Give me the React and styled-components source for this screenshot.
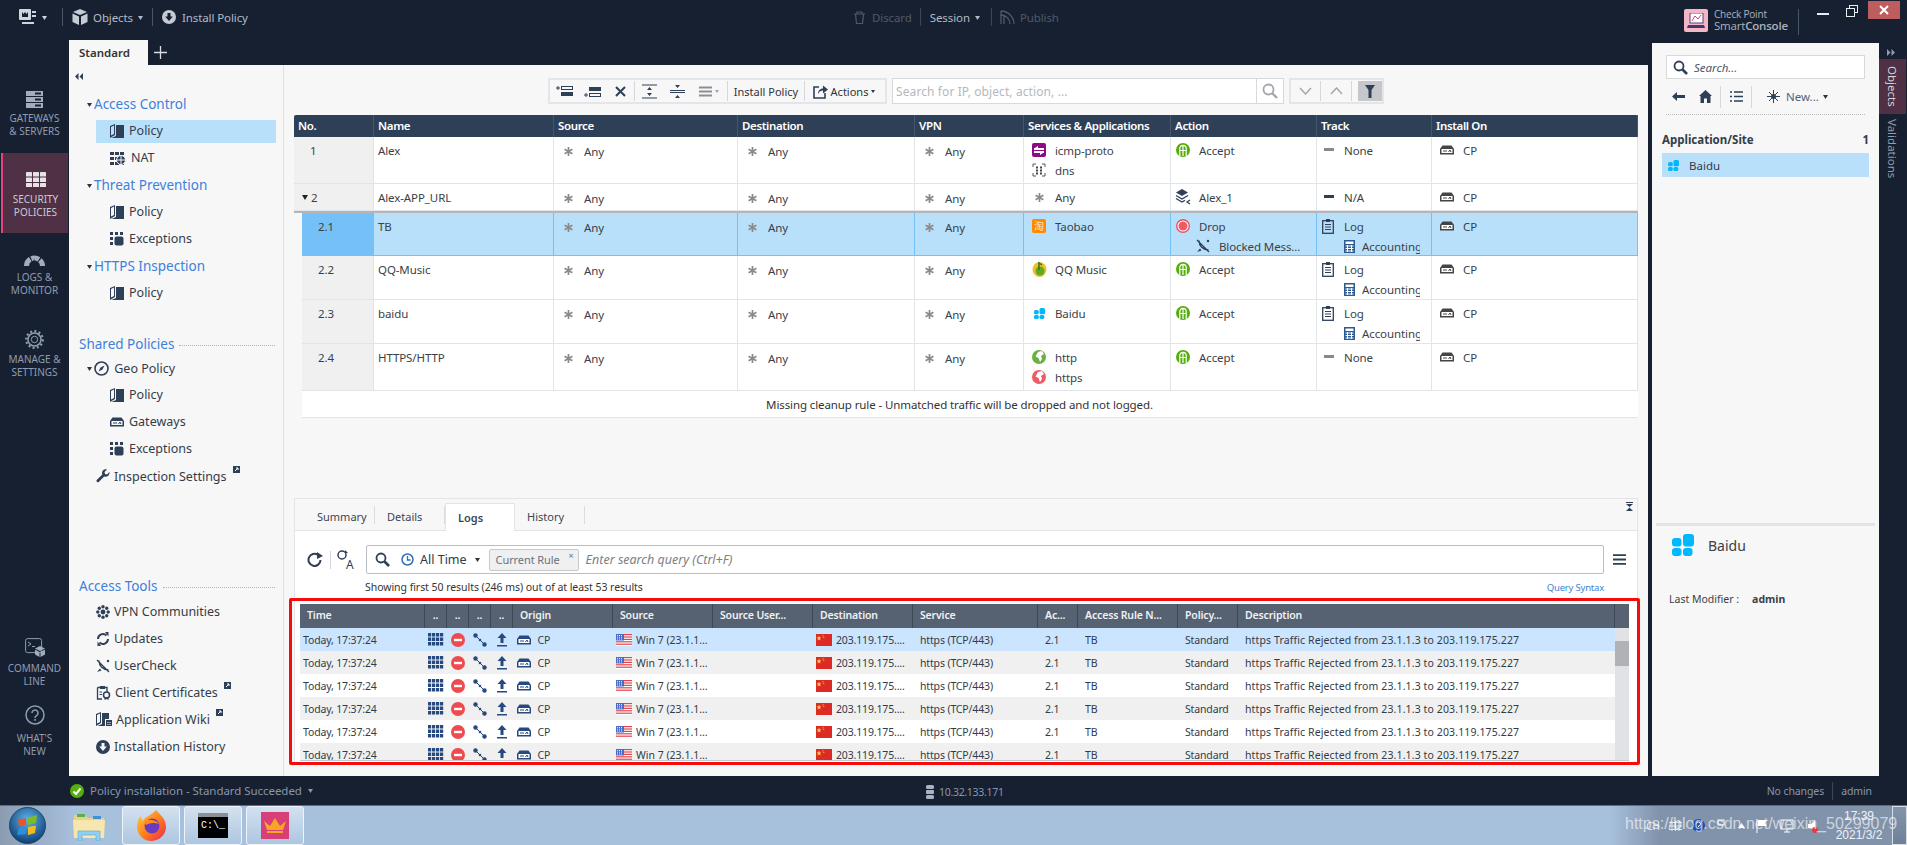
import styled, { createGlobalStyle } from 'styled-components';

const GlobalStyle = createGlobalStyle`
    html, body { margin: 0; padding: 0; background: #172030; }
    * { box-sizing: border-box; }
    body { font-family: "Noto Sans", "Open Sans", sans-serif; font-size: 12px; color: #3a3f48; }
`;

const DARK = '#2e3f58';

/* ---------- icons ---------- */
const Svg = ({ s = 14, w, h, children, ...rest }) => (
    <svg width={w || s} height={h || s} viewBox={`0 0 ${w || s} ${h || s}`} style={{ flex: 'none', display: 'block' }} {...rest}>{children}</svg>
);
const Caret = ({ c = '#333', s = 5 }) => <Svg w={s} h={s}><path d={`M0 1H${s}L${s / 2} ${s}Z`} fill={c} /></Svg>;
const BookIcon = ({ c = DARK }) => (
    <Svg><path d="M0 2 5 0V11L0 14Z M1 3V11.5L4 10V1.5Z" fill={c} fillRule="evenodd" /><path d="M6 1H14V14H1.5L6 12Z" fill={c} /></Svg>
);
const NatIcon = () => (
    <Svg w={16} h={14}>
        {[0, 5, 10].map(x => [1, 6, 11].map(y => <rect key={x + '' + y} x={x} y={y} width="4" height="3" fill={DARK} />))}
        <circle cx="11" cy="9" r="4.5" fill={DARK} stroke="#f7f7f7" />
        <path d="M11 5V13M7 9H15" stroke="#f7f7f7" />
    </Svg>
);
const ExceptionsIcon = () => (
    <Svg>
        <rect x="0" y="0" width="3" height="3" fill={DARK} /><rect x="5" y="0" width="3" height="3" fill={DARK} /><rect x="10" y="0" width="3" height="3" fill={DARK} />
        <rect x="0" y="5" width="3" height="3" fill={DARK} /><rect x="0" y="10" width="3" height="3" fill={DARK} />
        <rect x="4.5" y="4.5" width="9" height="9" rx="2" fill={DARK} />
    </Svg>
);
const DeviceIcon = ({ c = DARK, bg = '#fff' }) => (
    <Svg h={12}><path d="M2.5 1.5H11.5L14 5V10.5H0V5Z" fill={c} /><rect x="1.5" y="5" width="11" height="4" fill={bg} /><path d="M3 7H7M8.5 8 10 6 11 8" stroke={c} fill="none" /></Svg>
);
const CompassIcon = () => (
    <Svg s={15}><circle cx="7.5" cy="7.5" r="6.5" fill="none" stroke={DARK} strokeWidth="1.6" /><path d="M10.5 4.5 8.5 8.5 4.5 10.5 6.5 6.5Z" fill={DARK} /></Svg>
);
const WrenchIcon = () => (
    <Svg><path d="M13.5 3 11 5.5 9 5 8.5 3 11 .6C8.5-.3 6 1.5 6 4c0 .6.1 1 .3 1.5L.7 11c-.9 1 .9 3 2 2l5.5-5.5c2.8 1 5.8-1.5 5.3-4.5Z" fill={DARK} /></Svg>
);
const SnowIcon = () => (
    <Svg>
        <circle cx="7" cy="7" r="2.4" fill={DARK} />
        {[[7, 1.8], [7, 12.2], [1.8, 7], [12.2, 7], [3.3, 3.3], [10.7, 3.3], [3.3, 10.7], [10.7, 10.7]].map(([x, y]) => <circle key={x + '-' + y} cx={x} cy={y} r="1.7" fill={DARK} />)}
    </Svg>
);
const SyncIcon = () => (
    <Svg><path d="M2 7a5 5 0 0 1 8.5-3.5M12 7a5 5 0 0 1-8.5 3.5" fill="none" stroke={DARK} strokeWidth="2" /><path d="M9 0h3.5v4.5Z M5 14H1.5V9.5Z" fill={DARK} /></Svg>
);
const SatelliteIcon = () => (
    <Svg>
        <path d="M1 1 13 13M3 1.5C3 7 7 11 12.5 11" fill="none" stroke={DARK} strokeWidth="1.3" />
        <circle cx="12" cy="2" r="1.2" fill={DARK} /><path d="M1 13 4 9.5 5.5 11.5Z" fill={DARK} />
    </Svg>
);
const CertIcon = () => (
    <Svg w={15} h={15}>
        <path d="M1.5 2.5H11V7M6 14H1.5V2.5" fill="none" stroke={DARK} strokeWidth="1.3" /><rect x="4" y="1" width="5" height="3" fill={DARK} />
        <path d="M3.5 7H6M3.5 9.5H6" stroke={DARK} /><circle cx="10.5" cy="10" r="3" fill="none" stroke={DARK} strokeWidth="1.5" /><path d="M8.5 12.5V15L10.5 14 12.5 15V12.5" fill={DARK} />
    </Svg>
);
const WikiIcon = () => (
    <Svg w={16} h={15}><path d="M0 2 5 0V11L0 14Z M1 3V11.5L4 10V1.5Z" fill={DARK} fillRule="evenodd" /><path d="M6 1H13V7H9V14H1.5L6 12Z" fill={DARK} /><rect x="10" y="8" width="6" height="6" fill={DARK} /><path d="M11.5 10.5h1M13.5 10.5h1M11.5 12.5h1M13.5 12.5h1" stroke="#fff" /></Svg>
);
const InstallIcon = ({ c = DARK, bg = '#f7f7f7' }) => (
    <Svg><circle cx="7" cy="7" r="7" fill={c} /><path d="M5.5 3H8.5V6.5H10.8L7 11 3.2 6.5H5.5Z" fill={bg} /></Svg>
);
const ExternalBadge = () => (
    <ExternalMark><Svg s={7}><rect width="7" height="7" fill={DARK} /><path d="M2 5 5 2M3 2H5V4" stroke="#fff" fill="none" /></Svg></ExternalMark>
);
const AnyIcon = () => (
    <Svg s={9}><path d="M4.5 0V9M.6 2.2 8.4 6.8M8.4 2.2 .6 6.8" stroke="#8a8a8a" strokeWidth="1.7" /></Svg>
);
const AcceptIcon = () => (
    <Svg><circle cx="7" cy="7" r="7" fill="#55ae0c" /><path d="M3.8 13V5.5a3.2 3.2 0 0 1 6.4 0V13M3.800 7.500H10.200M7 2.500V13" fill="none" stroke="#fff" strokeWidth="1.2" /></Svg>
);
const DropIcon = () => (
    <Svg><circle cx="7" cy="7" r="6.3" fill="#fff" stroke="#ea5060" strokeWidth="1.4" /><circle cx="7" cy="7" r="4.5" fill="#ef5a64" /></Svg>
);
const LogIcon = () => (
    <Svg w={12} h={15}><rect x=".7" y="1.7" width="10.6" height="12.6" fill="none" stroke={DARK} strokeWidth="1.3" /><rect x="4" y="0" width="4" height="3" fill={DARK} /><path d="M3 5.5H9M3 8H9M3 10.5H9" stroke={DARK} /></Svg>
);
const CalcIcon = () => (
    <Svg w={11} h={13}><rect width="11" height="13" fill="#2c5b93" /><rect x="1.5" y="1.5" width="8" height="2.5" fill="#fff" /><path d="M1.5 6H9.5M1.5 8.5H9.5M1.5 11H9.5M3.5 5V12M7.5 5V12" stroke="#fff" /></Svg>
);
const DashIcon = ({ c = '#888' }) => <Svg w={10} h={4}><rect width="10" height="3" fill={c} /></Svg>;
const LayersIcon = () => (
    <Svg w={16} h={16}><path d="M7 0 13 3.5 7 7 1 3.5Z" fill={DARK} /><path d="M1 6.5 7 10 13 6.5M1 9.5 7 13 10 11.2" fill="none" stroke={DARK} strokeWidth="1.3" /><path d="M15 11 12 13 15 15" fill="none" stroke={DARK} strokeWidth="1.3" /></Svg>
);
const IcmpIcon = () => (
    <Svg><rect width="14" height="14" rx="2" fill="#8b0d86" /><path d="M2 5H12V7H2ZM2 8H12V10H2Z" fill="#fff" /><path d="M6 3 3 5H6ZM8 12 11 10H8Z" fill="#fff" /></Svg>
);
const DnsIcon = () => (
    <Svg>
        <path d="M4 1H1V4M10 1H13V4M4 13H1V10M10 13H13V10" fill="none" stroke="#555" />
        {[4, 8].map(x => [3.5, 6.5, 9.5].map(y => <rect key={x + '-' + y} x={x} y={y} width="2" height="2" fill="#444" />))}
    </Svg>
);
const TaobaoIcon = () => <TaobaoMark>淘</TaobaoMark>;
const QqIcon = () => (
    <Svg w={15} h={16}><ellipse cx="7.5" cy="8.5" rx="7" ry="7.5" fill="#f3c024" /><circle cx="8" cy="10" r="4.5" fill="#5fa82a" /><path d="M7 9V2L10 4" fill="none" stroke="#2e7a17" strokeWidth="1.5" /></Svg>
);
const BaiduIcon = ({ s = 11 }) => (
    <svg width={s} height={s} viewBox="0 0 22 22" style={{ flex: 'none', display: 'block' }}>
        <rect x="0" y="4" width="9.5" height="8.5" rx="3" fill="#00b8ff" /><rect x="11" y="0" width="11" height="12.5" rx="3" fill="#00b8ff" />
        <rect x="0" y="14" width="9.5" height="8" rx="3" fill="#00b8ff" /><rect x="11" y="14" width="9.5" height="8" rx="3" fill="#00b8ff" />
    </svg>
);
const GlobeIcon = ({ c }) => (
    <Svg><circle cx="7" cy="7" r="7" fill={c} /><path d="M6 2 10 1 12 4 9 6 10 9 8 12 6.5 8 3.5 6.5Z" fill="#fff" /></Svg>
);
const ServiceIcons = { icmp: IcmpIcon, dns: DnsIcon, taobao: TaobaoIcon, qq: QqIcon, baidu: BaiduIcon };

/* log row icons */
const LOGBLUE = '#26497f';
const BladeIcon = () => (
    <Svg w={16} h={13}>{[0, 4.5, 9].map(y => [0, 4, 8, 12].map(x => <rect key={x + '-' + y} x={x} y={y} width="3.2" height="3.5" fill={LOGBLUE} />))}</Svg>
);
const BlockIcon = () => <Svg><circle cx="7" cy="7" r="7" fill="#ee4b4f" /><rect x="3" y="5.8" width="8" height="2.4" fill="#fff" /></Svg>;
const NodesIcon = () => (
    <Svg><path d="M2 2 7 7 12 12" stroke={LOGBLUE} strokeWidth="1" /><circle cx="2.5" cy="2.5" r="2.2" fill={LOGBLUE} /><circle cx="7" cy="7" r="1.3" fill={LOGBLUE} /><circle cx="11.5" cy="11.5" r="2.2" fill={LOGBLUE} /></Svg>
);
const UploadIcon = () => <Svg w={10} h={14}><path d="M5 0 9.5 5H6.500V10H3.500V5H.5Z" fill={LOGBLUE} /><rect y="12" width="10" height="1.5" fill={LOGBLUE} /></Svg>;
const UsFlag = () => (
    <Svg w={16} h={12}>
        <rect width="16" height="12" fill="#fff" />
        {[0, 2.4, 4.8, 7.2, 9.6].map(y => <rect key={y} y={y} width="16" height="1.2" fill="#e0444c" />)}
        <rect width="8" height="6.5" fill="#4b6bc8" /><path d="M1 1.5h6M1 3.2h6M1 5h6" stroke="#dfe6ff" strokeDasharray="1 1" />
    </Svg>
);
const CnFlag = () => (
    <Svg w={16} h={12}><rect width="16" height="12" fill="#de2a24" /><path d="M3 1.5 3.7 3.5 5.5 3.5 4 4.7 4.6 6.5 3 5.4 1.4 6.5 2 4.7 .5 3.5 2.3 3.5Z" fill="#ffd84a" /><circle cx="7" cy="1.8" r=".6" fill="#ffd84a" /><circle cx="7.8" cy="3.5" r=".6" fill="#ffd84a" /></Svg>
);

/* ---------- top bar ---------- */
const Workspace = styled.div`
    display: flex;
    height: 776px;
`;
const LeftCol = styled.div`
    width: 1652px;
    display: flex;
    flex-direction: column;
`;
const TopBar = styled.div`
    height: 40px;
    display: grid;
    grid-template-columns: 853px auto;
    padding-bottom: 6px;
    color: #b3bac6;
    font-size: 11.5px;
    letter-spacing: -0.1px;
`;
const TopGroup = styled.div`
    display: flex;
    align-items: center;
`;
const TopItem = styled.span`
    display: flex;
    align-items: center;
    gap: ${p => p.$gap || 5}px;
    margin-left: ${p => p.$ml || 0}px;
    color: ${p => (p.$dim ? '#4f5969' : '#b3bac6')};
`;
const TopSep = styled.i`
    width: 1px;
    height: 18px;
    background: ${p => (p.$dim ? '#3b4556' : '#49566a')};
    margin-left: ${p => p.$ml || 0}px;
`;
const TabStrip = styled.div`
    height: 25px;
    padding-left: 69px;
    display: flex;
    align-items: stretch;
`;
const PolicyTab = styled.div`
    width: 79px;
    background: #f7f7f7;
    display: flex;
    align-items: center;
    padding-left: 10px;
    font-weight: 600;
    font-size: 11.5px;
    color: #333;
`;
const AddTab = styled.div`
    width: 30px;
    display: flex;
    align-items: center;
    justify-content: center;
    padding-right: 6px;
`;
const MainRow = styled.div`
    flex: 1;
    display: flex;
    min-height: 0;
`;

/* ---------- rail ---------- */
const Rail = styled.nav`
    width: 69px;
    display: flex;
    flex-direction: column;
    flex: none;
`;
const RailItem = styled.div`
    height: ${p => p.$h}px;
    padding-top: ${p => p.$pt}px;
    display: flex;
    flex-direction: column;
    align-items: center;
    gap: ${p => p.$gap ?? 4}px;
    flex: none;
    text-align: center;
    text-transform: uppercase;
    font-size: 10px;
    line-height: 13px;
    color: #8f9cb0;
    margin-left: ${p => (p.$active ? 1 : 0)}px;
    margin-right: ${p => (p.$active ? 1 : 0)}px;
    background: ${p => (p.$active ? '#4f3044' : 'transparent')};
    border-left: ${p => (p.$active ? '2px solid #e0457b' : 'none')};
    ${p => p.$active && 'color: #c7cbd4;'}
`;
const RailSpacer = styled.div`
    flex: 1;
`;

/* ---------- tree ---------- */
const TreePanel = styled.aside`
    width: 215px;
    flex: none;
    background: #f7f7f7;
    border-right: 1px solid #dfdfdf;
    display: flex;
    flex-direction: column;
    padding-bottom: 16px;
`;
const TreeCollapse = styled.div`
    height: 25.5px;
    padding: 8px 0 0 6px;
`;
const TreeHead = styled.div`
    height: 27px;
    display: flex;
    align-items: center;
    gap: 2px;
    padding-left: 18px;
    color: #3d7fdb;
    font-size: 13.5px;
`;
const TreeRow = styled.div`
    height: 23px;
    margin: 2px 7px 2px 27px;
    padding: 0 0 1px 14px;
    display: flex;
    align-items: center;
    gap: 5px;
    font-size: 12.5px;
    color: #343c4a;
    background: ${p => (p.$active ? '#b9e0fb' : 'transparent')};
`;
const TreeTool = styled.div`
    height: 27px;
    padding-left: ${p => (p.$caret ? 18 : 27)}px;
    display: flex;
    align-items: center;
    gap: ${p => (p.$caret ? 2 : 4)}px;
    font-size: 12.5px;
    color: #343c4a;
`;
const SectionTitle = styled.div`
    height: ${p => p.$h}px;
    margin-top: ${p => p.$mt || 0}px;
    padding: 0 8px 0 10px;
    display: flex;
    align-items: center;
    gap: 5px;
    color: #3d7fdb;
    font-size: 13.5px;
    &::after {
        content: '';
        flex: 1;
        border-top: 1px dotted #b4b4b4;
        margin-top: 3px;
    }
`;
const ExternalMark = styled.span`
    align-self: flex-start;
    margin: 3px 0 0 2px;
`;
const TreeSpacer = styled.div`
    flex: 1;
`;

/* ---------- policy content ---------- */
const Content = styled.main`
    width: 1364px;
    flex: none;
    background: #f7f7f7;
    padding: 13px 10px 11px;
    display: flex;
    flex-direction: column;
`;
const ToolRow = styled.div`
    height: 26px;
    margin-bottom: 11px;
    display: flex;
    justify-content: center;
    gap: 5px;
    font-size: 11px;
`;
const ToolBox = styled.div`
    width: ${p => p.$w}px;
    border: 2px solid #e3e5e8;
    display: flex;
    align-items: center;
    color: #333;
`;
const ToolBtn = styled.span`
    display: flex;
    justify-content: center;
    align-items: center;
    gap: 3px;
    width: ${p => p.$w}px;
    flex: none;
`;
const ToolSep = styled.i`
    width: 1px;
    height: 20px;
    background: #d5d7da;
    flex: none;
`;
const SearchBox = styled.div`
    width: 392px;
    border: 1px solid #d7d9dc;
    background: #fff;
    display: flex;
    align-items: center;
    padding-left: 3px;
    color: #b5b8bd;
    font-size: 12px;
    letter-spacing: .1px;
`;
const SearchGo = styled.span`
    margin-left: auto;
    width: 27px;
    height: 100%;
    border-left: 1px solid #d7d9dc;
    display: flex;
    align-items: center;
    justify-content: center;
`;
const FilterBtn = styled.span`
    width: 24px;
    height: 20px;
    background: #c5c7ca;
    margin-left: 6px;
    display: flex;
    align-items: center;
    justify-content: center;
`;

const RULE_COLS = '80px 180px 184px 177px 109px 147px 146px 115px 1fr';
const RULE_COLS_SUB = '72px 180px 184px 177px 109px 147px 146px 115px 1fr';

const RuleTable = styled.section`
    width: 1344px;
    font-size: 11.5px;
    letter-spacing: -0.1px;
`;
const RuleHead = styled.div`
    display: grid;
    grid-template-columns: ${RULE_COLS};
    height: 22px;
    background: ${DARK};
    border-radius: 2px 2px 0 0;
    color: #fff;
    font-weight: 600;
    font-size: 11.5px;
`;
const RuleHeadCell = styled.div`
    padding-left: 4px;
    line-height: 21px;
    border-right: 1px solid #46566e;
    white-space: nowrap;
    letter-spacing: -0.35px;
`;
const RuleRow = styled.div`
    display: grid;
    grid-template-columns: ${p => (p.$sub ? RULE_COLS_SUB : RULE_COLS)};
    height: ${p => p.$h}px;
    margin-left: ${p => (p.$sub ? 8 : 0)}px;
    background: ${p => (p.$selected ? '#b9e0fb' : '#fff')};
    border-bottom: ${p => (p.$selected ? '1px solid #74c0f7' : '1px solid #e1e4e8')};
`;
const RuleCell = styled.div`
    border-right: 1px solid ${p => (p.$selected ? '#74c0f7' : '#e1e4e8')};
    padding: 3px 0 0 ${p => p.$pl ?? 4}px;
    overflow: hidden;
    background: ${p => p.$bg || 'transparent'};
`;
const CellLine = styled.div`
    height: 20px;
    display: flex;
    align-items: center;
    white-space: nowrap;
    gap: ${p => p.$gap || 6}px;
    margin-left: ${p => p.$ml || 0}px;
    padding-top: ${p => (p.$drop ? 2 : 0)}px;
`;
const IconSlot = styled.span`
    width: ${p => p.$w || 16}px;
    display: flex;
    justify-content: center;
    flex: none;
`;
const ClippedText = styled.span`
    width: ${p => p.$w}px;
    overflow: hidden;
`;
const GroupRule = styled.div`
    height: 2px;
    background: #b5b5b5;
`;
const MissingRow = styled.div`
    margin-left: 8px;
    height: 27px;
    background: #fff;
    border-bottom: 1px solid #e1e4e8;
    display: flex;
    align-items: center;
    justify-content: center;
    padding-right: 21px;
    color: #333;
`;
const TaobaoMark = styled.span`
    width: 14px;
    height: 14px;
    border-radius: 2px;
    background: #ff8a00;
    color: #ffe9c0;
    font: 10px/14px "Noto Sans CJK SC", sans-serif;
    text-align: center;
    flex: none;
`;

/* ---------- details ---------- */
const DetailPanel = styled.section`
    margin-top: 80px;
    width: 1344px;
    flex: 1;
    border: 1px solid #e3e5e8;
    border-bottom: none;
    display: flex;
    flex-direction: column;
    background: #fff;
`;
const DetailTabs = styled.div`
    height: 32px;
    background: #f7f7f7;
    border-bottom: 1px solid #e1e4e8;
    display: flex;
    align-items: flex-end;
    font-size: 11px;
    color: #3b4656;
`;
const DetailTab = styled.div`
    width: ${p => p.$w}px;
    height: 27px;
    padding-left: ${p => p.$pl || 12}px;
    display: flex;
    align-items: center;
    ${p => p.$sep && 'background: linear-gradient(#dcdcdc, #dcdcdc) right 3px / 1px 18px no-repeat;'}
    ${p => p.$active && `
        background: #fff;
        border: 1px solid #e1e4e8;
        border-bottom: none;
        font-weight: 600;
        margin-bottom: -1px;
        height: 28px;
    `}
`;
const ExpandMark = styled.span`
    margin: 0 4px 18px auto;
`;
const LogsBody = styled.div`
    flex: 1;
    display: flex;
    flex-direction: column;
    padding-top: 14px;
`;
const QueryRow = styled.div`
    height: 29px;
    display: flex;
    align-items: center;
    padding-left: 12px;
`;
const QuerySep = styled.i`
    width: 1px;
    height: 18px;
    background: #d5d7da;
    margin: 0 6px 0 7px;
`;
const QueryBox = styled.div`
    width: 1238px;
    height: 29px;
    margin-left: 11px;
    border: 1px solid #b9bec5;
    border-radius: 2px;
    display: flex;
    align-items: center;
    padding-left: 8px;
    color: #2f3a4a;
    font-size: 12.5px;
`;
const QueryGap = styled.i`
    width: ${p => p.$w}px;
    flex: none;
`;
const RuleChip = styled.span`
    width: 90px;
    height: 22px;
    background: #f0f0f0;
    border: 1px solid #c7c9cc;
    border-radius: 2px;
    margin-right: 7px;
    padding: 0 4px 0 6px;
    font-size: 11px;
    line-height: 20px;
    color: #6a7280;
    display: flex;
    justify-content: space-between;
    letter-spacing: -0.1px;
`;
const ChipClose = styled.small`
    font-size: 9px;
    line-height: 12px;
`;
const QueryHint = styled.span`
    font-style: italic;
    font-size: 12.5px;
    color: #7d8083;
`;
const MenuMark = styled.span`
    margin-left: 9px;
`;
const ResultRow = styled.div`
    height: 24px;
    margin-bottom: 6px;
    padding: 2px 33px 0 70px;
    display: flex;
    align-items: center;
    justify-content: space-between;
    font-size: 10.5px;
    letter-spacing: -0.05px;
    color: #333;
`;
const SyntaxLink = styled.span`
    color: #3d7fdb;
    font-size: 9.5px;
    letter-spacing: -0.2px;
`;

const LOG_COLS = '125px 22px 22px 22px 22px 100px 100px 100px 100px 125px 40px 100px 60px 1fr';

const LogFrame = styled.div`
    position: relative;
    margin-left: 5px;
    width: 1328.5px;
    height: 157px;
    font-size: 10.5px;
    letter-spacing: -0.15px;
`;
const RedFrame = styled.div`
    position: absolute;
    inset: -6px -11px -4px -11px;
    border: 3px solid #f40c0c;
    border-radius: 2px;
    pointer-events: none;
`;
const LogClip = styled.div`
    height: 157px;
    overflow: hidden;
    display: flex;
    flex-direction: column;
    border-bottom: 1px solid #c4c7cb;
`;
const LogHead = styled.div`
    display: flex;
    height: 24px;
    flex: none;
    background: #566172;
    color: #eef1f4;
    font-weight: 600;
`;
const LogHeadCols = styled.div`
    display: grid;
    grid-template-columns: ${LOG_COLS};
    flex: 1;
`;
const LogHeadCell = styled.div`
    border-right: 1px solid #3e4756;
    padding-left: ${p => (p.$dots ? 0 : 7)}px;
    text-align: ${p => (p.$dots ? 'center' : 'left')};
    line-height: 23px;
    white-space: nowrap;
    overflow: hidden;
`;
const ScrollCap = styled.div`
    width: 13.5px;
    flex: none;
`;
const LogBodyWrap = styled.div`
    display: flex;
    flex: 1;
    min-height: 0;
`;
const LogRows = styled.div`
    flex: 1;
`;
const LogRow = styled.div`
    display: grid;
    grid-template-columns: ${LOG_COLS};
    height: 23px;
    align-items: center;
    color: #333b46;
    background: ${p => (p.$selected ? '#cce5ff' : p.$alt ? '#f0f0f0' : '#fff')};
`;
const LogCell = styled.div`
    display: flex;
    align-items: center;
    justify-content: ${p => (p.$center ? 'center' : 'flex-start')};
    gap: 4px;
    padding-left: ${p => p.$pl ?? 7}px;
    white-space: nowrap;
    overflow: hidden;
    letter-spacing: ${p => p.$ls ?? -0.15}px;
`;
const ScrollTrack = styled.div`
    width: 13.5px;
    flex: none;
    background: #e0e2e6;
    padding-top: 13px;
`;
const ScrollThumb = styled.div`
    height: 25px;
    background: #b0b2b5;
`;

/* ---------- right panel ---------- */
const RightCol = styled.div`
    width: 255px;
    display: flex;
    flex-direction: column;
`;
const TitleBar = styled.header`
    height: 43px;
    display: flex;
    padding-left: 32px;
`;
const Logo = styled.div`
    width: 24px;
    height: 23px;
    margin-top: 9px;
    background: #f4b6c4;
    border-radius: 2px;
    display: flex;
    align-items: center;
    justify-content: center;
`;
const Brand = styled.div`
    margin: 9px 0 0 6px;
    width: 85px;
    color: #aab2bf;
    font-size: 10px;
    line-height: 11px;
    letter-spacing: -0.2px;
    border-right: 1px solid #48566b;
    height: 26px;
    font-family: "Open Sans", sans-serif;
    & b {
        font-weight: 600;
    }
`;
const BrandLine = styled.div`
    font-size: ${p => p.$fs || 10}px;
`;
const WinBtn = styled.div`
    width: ${p => p.$w}px;
    margin-left: ${p => p.$ml}px;
    padding-top: ${p => p.$pt}px;
    display: flex;
    justify-content: center;
`;
const CloseBtn = styled.div`
    width: 32px;
    height: 18px;
    margin: 1px 0 0 10px;
    background: #bd5d5d;
    display: flex;
    align-items: center;
    justify-content: center;
`;
const PanelRow = styled.div`
    flex: 1;
    display: flex;
    min-height: 0;
`;
const ObjectsPanel = styled.aside`
    width: 227px;
    background: #f7f7f7;
    display: flex;
    flex-direction: column;
    padding-top: 12px;
`;
const ObjectSearch = styled.div`
    margin: 0 14px;
    height: 24px;
    background: #fff;
    border: 1px solid #d7d9dc;
    display: flex;
    align-items: center;
    gap: 6px;
    padding-left: 6px;
    font-style: italic;
    color: #4c5666;
    font-size: 11.5px;
`;
const ObjectTools = styled.div`
    height: 36px;
    margin: 0 14px;
    padding-left: 6px;
    display: flex;
    align-items: center;
    border-bottom: 1px dotted #bdbdbd;
    color: #54607a;
    font-size: 11.5px;
`;
const ObjectToolGap = styled.i`
    width: ${p => p.$w}px;
    flex: none;
`;
const ObjectToolSep = styled.i`
    width: 1px;
    height: 22px;
    background: #d5d7da;
    margin: 0 ${p => p.$mr}px 0 ${p => p.$ml}px;
`;
const ObjectGroup = styled.div`
    display: flex;
    justify-content: space-between;
    margin: 17px 10px 0;
    height: 21px;
    font-weight: 700;
    font-size: 11.5px;
    color: #343c4a;
`;
const ObjectItem = styled.div`
    height: 24px;
    margin: 0 10px;
    padding-left: 6px;
    display: flex;
    align-items: center;
    gap: 10px;
    background: #b9e0fb;
    color: #343c4a;
    font-size: 11.5px;
`;
const PanelSpacer = styled.div`
    flex: 1;
`;
const PreviewRule = styled.div`
    height: 3px;
    margin: 0 4px;
    background: #e2e4e9;
`;
const Preview = styled.div`
    height: 250px;
    padding: 7px 0 0 20px;
`;
const PreviewName = styled.div`
    display: flex;
    align-items: center;
    gap: 14px;
    font-size: 14px;
    color: #3b3f46;
    height: 24px;
`;
const PreviewMeta = styled.div`
    margin: 35px 0 0 -3px;
    font-size: 10.5px;
    color: #3b3f46;
    display: flex;
    gap: 13px;
    & b {
        font-weight: 700;
    }
`;
const SideStrip = styled.div`
    width: 28px;
    padding-top: 4px;
    display: flex;
    flex-direction: column;
    align-items: stretch;
    color: #9aa4b4;
    font-size: 11.5px;
`;
const StripMark = styled.div`
    height: 12px;
    padding: 2px 0 0 8px;
`;
const StripTab = styled.div`
    writing-mode: vertical-rl;
    height: ${p => p.$h}px;
    width: 27px;
    margin-bottom: 6px;
    display: flex;
    align-items: center;
    justify-content: center;
    background: ${p => (p.$active ? '#4f3044' : 'transparent')};
    color: ${p => (p.$active ? '#d8d3da' : '#8f9cb0')};
`;

/* ---------- bottom ---------- */
const StatusBar = styled.footer`
    height: 29px;
    display: flex;
    align-items: center;
    padding: 0 35px 0 70px;
    color: #8796ad;
    font-size: 11.5px;
    letter-spacing: -0.05px;
`;
const StatusLeft = styled.div`
    width: 856px;
    display: flex;
    align-items: center;
    gap: 6px;
`;
const StatusMid = styled.div`
    display: flex;
    align-items: center;
    gap: 5px;
    font-size: 10.5px;
    letter-spacing: -0.3px;
    padding-top: 3px;
`;
const StatusRight = styled.div`
    margin-left: auto;
    display: flex;
    align-items: center;
    font-size: 10.5px;
    letter-spacing: -0.1px;
`;
const StatusSep = styled.i`
    width: 1px;
    height: 18px;
    background: #3a4558;
    margin: 0 8px;
`;
const Taskbar = styled.div`
    height: 40px;
    position: relative;
    display: flex;
    border-top: 1px solid #5d6c80;
    background: linear-gradient(90deg, #8b9cb2 0, #a7c0dc 75px, #a7c0dc 1610px, #8193ab 1660px, #8193ab 100%);
`;
const StartSlot = styled.div`
    width: 64px;
    flex: none;
    padding: 1px 0 0 9px;
`;
const FolderSlot = styled.div`
    width: 58px;
    flex: none;
    padding: 6px 0 0 9px;
`;
const TaskButton = styled.div`
    width: 58px;
    margin-right: 4px;
    height: 39px;
    border: 1px solid #eef4fb;
    border-radius: 3px;
    background: linear-gradient(#d3e1f0, #aec6e0);
    display: flex;
    align-items: center;
    justify-content: center;
    flex: none;
`;
const CmdTile = styled.div`
    width: 30px;
    height: 25px;
    background: #000;
    border-top: 4px solid #8c8f94;
    color: #fff;
    font: 10px/17px "Liberation Mono", monospace;
    padding-left: 3px;
`;
const CrownTile = styled.div`
    width: 28px;
    height: 27px;
    background: #d83e78;
    display: flex;
    align-items: center;
    justify-content: center;
`;
const Tray = styled.div`
    margin-left: auto;
    display: flex;
    align-items: center;
    color: #e8edf3;
    font-size: 10px;
`;
const TrayItem = styled.span`
    width: ${p => p.$w}px;
    display: flex;
    justify-content: center;
    flex: none;
`;
const Clock = styled.div`
    width: 66px;
    text-align: center;
    line-height: 19px;
    font-size: 12px;
    color: #eef2f7;
    font-family: "Liberation Sans", sans-serif;
`;
const ShowDesktop = styled.div`
    width: 15px;
    height: 39px;
    border: 1px solid #d6dee8;
    background: linear-gradient(#8295ad, #6f8199);
    flex: none;
`;
const Watermark = styled.div`
    position: absolute;
    left: 1625px;
    top: 9px;
    font-family: "Liberation Sans", sans-serif;
    font-size: 16px;
    color: rgba(255, 255, 255, .62);
    white-space: nowrap;
`;

/* ---------- data ---------- */
const RULE_HEADERS = ['No.', 'Name', 'Source', 'Destination', 'VPN', 'Services & Applications', 'Action', 'Track', 'Install On'];
const LOG_HEADERS = ['Time', '..', '..', '..', '..', 'Origin', 'Source', 'Source User...', 'Destination', 'Service', 'Ac...', 'Access Rule N...', 'Policy...', 'Description'];

const RULES = [
    { no: '1', name: 'Alex', h: 47, services: [['icmp', 'icmp-proto'], ['dns', 'dns']], action: 'accept', track: 'none' },
    { no: '2', name: 'Alex-APP_URL', h: 27, group: true, services: [['any', 'Any']], action: 'layer', track: 'na' },
    { no: '2.1', name: 'TB', h: 43, sub: true, selected: true, services: [['taobao', 'Taobao']], action: 'drop', track: 'log' },
    { no: '2.2', name: 'QQ-Music', h: 44, sub: true, services: [['qq', 'QQ Music']], action: 'accept', track: 'log' },
    { no: '2.3', name: 'baidu', h: 44, sub: true, services: [['baidu', 'Baidu']], action: 'accept', track: 'log' },
    { no: '2.4', name: 'HTTPS/HTTP', h: 47, sub: true, services: [['green', 'http'], ['red', 'https']], action: 'accept', track: 'none' },
];

const Any = () => (
    <CellLine $gap={11} $ml={6} $drop><IconSlot $w={9}><AnyIcon /></IconSlot><span>Any</span></CellLine>
);

const ServiceGlyph = ({ kind }) => {
    if (kind === 'any') return <AnyIcon />;
    if (kind === 'green') return <GlobeIcon c="#6ab044" />;
    if (kind === 'red') return <GlobeIcon c="#ef5a64" />;
    const Icon = ServiceIcons[kind];
    return <Icon />;
};

const ActionCell = ({ kind }) => {
    if (kind === 'drop') {
        return (
            <>
                <CellLine $ml={4} $gap={8}><IconSlot><DropIcon /></IconSlot><span>Drop</span></CellLine>
                <CellLine $ml={24} $gap={8}><IconSlot><SatelliteIcon /></IconSlot><span>Blocked Mess...</span></CellLine>
            </>
        );
    }
    if (kind === 'layer') {
        return <CellLine $ml={4} $gap={8}><IconSlot><LayersIcon /></IconSlot><span>Alex_1</span></CellLine>;
    }
    return <CellLine $ml={4} $gap={8}><IconSlot><AcceptIcon /></IconSlot><span>Accept</span></CellLine>;
};

const TrackCell = ({ kind }) => {
    if (kind === 'log') {
        return (
            <>
                <CellLine $ml={1} $gap={10}><IconSlot $w={12}><LogIcon /></IconSlot><span>Log</span></CellLine>
                <CellLine $ml={22} $gap={7}><IconSlot $w={12}><CalcIcon /></IconSlot><ClippedText $w={58}>Accounting</ClippedText></CellLine>
            </>
        );
    }
    return (
        <CellLine $ml={1} $gap={8}>
            <IconSlot $w={14}><DashIcon c={kind === 'na' ? DARK : '#888'} /></IconSlot>
            <span>{kind === 'na' ? 'N/A' : 'None'}</span>
        </CellLine>
    );
};

const Rule = ({ rule }) => {
    const s = rule.selected;
    const noBg = s ? '#74c0f7' : '#f0f0f0';
    return (
        <RuleRow $h={rule.h} $sub={rule.sub} $selected={s}>
            <RuleCell $selected={s} $bg={noBg} $pl={rule.group ? 8 : 16}>
                <CellLine $gap={3}>{rule.group && <Caret c="#222" s={6} />}<span>{rule.no}</span></CellLine>
            </RuleCell>
            <RuleCell $selected={s} $pl={4}><CellLine>{rule.name}</CellLine></RuleCell>
            <RuleCell $selected={s} $pl={4}><Any /></RuleCell>
            <RuleCell $selected={s} $pl={4}><Any /></RuleCell>
            <RuleCell $selected={s} $pl={4}><Any /></RuleCell>
            <RuleCell $selected={s} $pl={7}>
                {rule.services.map(([k, t]) => (
                    <CellLine key={t} $gap={8}><IconSlot><ServiceGlyph kind={k} /></IconSlot><span>{t}</span></CellLine>
                ))}
            </RuleCell>
            <RuleCell $selected={s} $pl={0}><ActionCell kind={rule.action} /></RuleCell>
            <RuleCell $selected={s} $pl={4}><TrackCell kind={rule.track} /></RuleCell>
            <RuleCell $selected={s} $pl={7}>
                <CellLine $gap={8}><IconSlot><DeviceIcon c="#444" /></IconSlot><span>CP</span></CellLine>
            </RuleCell>
        </RuleRow>
    );
};

const LogLine = ({ i }) => (
    <LogRow $selected={i === 0} $alt={i % 2 === 1}>
        <LogCell $pl={3}>Today, 17:37:24</LogCell>
        <LogCell $center $pl={0}><BladeIcon /></LogCell>
        <LogCell $center $pl={0}><BlockIcon /></LogCell>
        <LogCell $center $pl={0}><NodesIcon /></LogCell>
        <LogCell $center $pl={0}><UploadIcon /></LogCell>
        <LogCell $pl={4}><DeviceIcon c={LOGBLUE} />&nbsp;CP</LogCell>
        <LogCell $pl={3} $ls={0}><UsFlag />Win 7 (23.1.1...</LogCell>
        <LogCell />
        <LogCell $pl={3}><CnFlag />203.119.175....</LogCell>
        <LogCell>https (TCP/443)</LogCell>
        <LogCell>2.1</LogCell>
        <LogCell>TB</LogCell>
        <LogCell>Standard</LogCell>
        <LogCell $ls={0.12}>https Traffic Rejected from 23.1.1.3 to 203.119.175.227</LogCell>
    </LogRow>
);

const Gray = '#8f9cb0';

export default function App() {
    return (
        <>
            <GlobalStyle />
            <Workspace>
                <LeftCol>
                    <TopBar>
                        <TopGroup>
                            <TopItem $ml={19} $gap={6}>
                                <Svg w={17} h={16}><rect width="12" height="11" rx="1" fill="#cfd5de" /><path d="M3 3 4.5 5 6 3 7.5 5 9 3V8H3Z" fill="#172030" /><rect x="13" y="2" width="4" height="2" fill="#cfd5de" /><rect x="13" y="6" width="4" height="2" fill="#cfd5de" /><rect x="3" y="13" width="12" height="2" fill="#cfd5de" /></Svg>
                                <Caret c="#cfd5de" />
                            </TopItem>
                            <TopSep $ml={15} />
                            <TopItem $ml={9}>
                                <Svg s={16}><path d="M8 0 15 3 8 6 1 3Z" fill="#c5cbd5" /><path d="M.5 4.5 7 7.5V16L.5 13ZM15.5 4.5 9 7.5V16L15.5 13Z" fill="#c5cbd5" /></Svg>
                                Objects <Caret c="#b3bac6" />
                            </TopItem>
                            <TopSep $ml={9} />
                            <TopItem $ml={9} $gap={6}>
                                <InstallIcon c="#c5cbd5" bg="#172030" />
                                Install Policy
                            </TopItem>
                        </TopGroup>
                        <TopGroup>
                            <TopItem $dim $gap={6}>
                                <Svg s={13}><path d="M1 3H12M4 3V1H9V3M2.5 3.5 3.5 12.5H9.5L10.5 3.5" fill="none" stroke="#4f5969" strokeWidth="1.2" /></Svg>
                                Discard
                            </TopItem>
                            <TopSep $dim $ml={8} />
                            <TopItem $ml={9} $gap={5}>Session <Caret c="#b3bac6" /></TopItem>
                            <TopSep $dim $ml={11} />
                            <TopItem $ml={8} $dim $gap={5}>
                                <Svg s={15}><path d="M1 14V1M4 14V5M1 5C6 5 10 9 10 14M1 1C8 1 14 7 14 14" fill="none" stroke="#4f5969" strokeWidth="1.3" /></Svg>
                                Publish
                            </TopItem>
                        </TopGroup>
                    </TopBar>
                    <TabStrip>
                        <PolicyTab>Standard</PolicyTab>
                        <AddTab><Svg s={13}><path d="M6.5 0V13M0 6.5H13" stroke="#d8dce2" strokeWidth="1.3" /></Svg></AddTab>
                    </TabStrip>
                    <MainRow>
                        <Rail>
                            <RailItem $h={88} $pt={26}>
                                <Svg w={17} h={17}>{[0, 6, 12].map(y => <g key={y}><rect y={y} width="17" height="5" fill="#a2acbb" /><rect x="9" y={y + 1.5} width="6" height="2" fill="#172030" /></g>)}</Svg>
                                <span>Gateways<br />&amp; Servers</span>
                            </RailItem>
                            <RailItem $h={80} $pt={19} $active $gap={6}>
                                <Svg w={20} h={15}>{[0, 5.5, 11].map(y => [0, 7, 14].map(x => <rect key={x + '-' + y} x={x} y={y} width="6" height="4.5" rx=".5" fill="#e6e3e7" />))}</Svg>
                                <span>Security<br />Policies</span>
                            </RailItem>
                            <RailItem $h={85} $pt={21} $gap={5}>
                                <Svg w={21} h={12}><path d="M2.5 12A8 8 0 0 1 18.5 12" fill="none" stroke="#a2acbb" strokeWidth="5" strokeDasharray="8 1.2" /><path d="M10 4 11.5 12H9Z" fill="#172030" /></Svg>
                                <span>Logs &amp;<br />Monitor</span>
                            </RailItem>
                            <RailItem $h={70} $pt={12}>
                                <Svg s={19}><circle cx="9.5" cy="9.5" r="6.5" fill="none" stroke={Gray} strokeWidth="1.5" /><circle cx="9.5" cy="9.5" r="3.2" fill="none" stroke={Gray} /><circle cx="9.5" cy="9.5" r="8.3" fill="none" stroke={Gray} strokeWidth="2.2" strokeDasharray="2 2.3" /></Svg>
                                <span>Manage &amp;<br />Settings</span>
                            </RailItem>
                            <RailSpacer />
                            <RailItem $h={67} $pt={0}>
                                <Svg w={20} h={20}><rect x=".6" y=".6" width="16" height="14" rx="2" fill="none" stroke={Gray} /><path d="M3 4 6 6 3 8M7 8.5H10" fill="none" stroke={Gray} /><path d="M15 8 20 10.5 15 13 10 10.5Z" fill="#a2acbb" /><path d="M10 11.5 14.5 14V19L10 16.5ZM20 11.5 15.5 14V19L20 16.5Z" fill="#a2acbb" /></Svg>
                                <span>Command<br />Line</span>
                            </RailItem>
                            <RailItem $h={71} $pt={0} $gap={7}>
                                <Svg s={20}><circle cx="10" cy="10" r="9" fill="none" stroke={Gray} strokeWidth="1.5" /><path d="M7 8a3 3 0 1 1 4.5 2.6C10.3 11.3 10 12 10 13" fill="none" stroke={Gray} strokeWidth="1.5" /><rect x="9.2" y="14" width="1.6" height="1.8" fill={Gray} /></Svg>
                                <span>What's<br />New</span>
                            </RailItem>
                        </Rail>

                        <TreePanel>
                            <TreeCollapse>
                                <Svg w={8} h={7}><path d="M3.5 0V7L0 3.5ZM8 0V7L4.5 3.5Z" fill={DARK} /></Svg>
                            </TreeCollapse>
                            <TreeHead><Caret />Access Control</TreeHead>
                            <TreeRow $active><BookIcon />Policy</TreeRow>
                            <TreeRow><NatIcon />NAT</TreeRow>
                            <TreeHead><Caret />Threat Prevention</TreeHead>
                            <TreeRow><BookIcon />Policy</TreeRow>
                            <TreeRow><ExceptionsIcon />Exceptions</TreeRow>
                            <TreeHead><Caret />HTTPS Inspection</TreeHead>
                            <TreeRow><BookIcon />Policy</TreeRow>

                            <SectionTitle $h={22} $mt={26}>Shared Policies</SectionTitle>
                            <TreeTool $caret><Caret /><CompassIcon />&nbsp;Geo Policy</TreeTool>
                            <TreeRow><BookIcon />Policy</TreeRow>
                            <TreeRow><DeviceIcon bg="#f7f7f7" />Gateways</TreeRow>
                            <TreeRow><ExceptionsIcon />Exceptions</TreeRow>
                            <TreeTool><WrenchIcon />Inspection Settings<ExternalBadge /></TreeTool>

                            <TreeSpacer />
                            <SectionTitle $h={24}>Access Tools</SectionTitle>
                            <TreeTool><SnowIcon />VPN Communities</TreeTool>
                            <TreeTool><SyncIcon />Updates</TreeTool>
                            <TreeTool><SatelliteIcon />UserCheck</TreeTool>
                            <TreeTool><CertIcon />Client Certificates<ExternalBadge /></TreeTool>
                            <TreeTool><WikiIcon />Application Wiki<ExternalBadge /></TreeTool>
                            <TreeTool><InstallIcon />Installation History</TreeTool>
                        </TreePanel>

                        <Content>
                            <ToolRow>
                                <ToolBox $w={339}>
                                    <ToolBtn $w={28}>
                                        <Svg w={17} h={13}><path d="M0 3H4M2 1V5" stroke={DARK} /><rect x="5.5" y="1.5" width="11" height="3" fill="none" stroke={DARK} /><rect x="5" y="7" width="12" height="4" fill={DARK} /></Svg>
                                    </ToolBtn>
                                    <ToolBtn $w={28}>
                                        <Svg w={17} h={13}><path d="M0 10H4M2 8V12" stroke={DARK} /><rect x="5.5" y="8.5" width="11" height="3" fill="none" stroke={DARK} /><rect x="5" y="2" width="12" height="4" fill={DARK} /></Svg>
                                    </ToolBtn>
                                    <ToolBtn $w={28}><Svg s={11}><path d="M1 1 10 10M10 1 1 10" stroke={DARK} strokeWidth="2" /></Svg></ToolBtn>
                                    <ToolSep />
                                    <ToolBtn $w={29}><Svg w={15} h={15}><path d="M0 1H15M0 14H15" stroke={DARK} /><path d="M7.5 3 10 6H5ZM7.5 12 5 9H10Z" fill={DARK} /></Svg></ToolBtn>
                                    <ToolBtn $w={27}><Svg w={15} h={15}><path d="M0 6.5H15M0 8.5H15" stroke={DARK} /><path d="M7.5 4 5 1H10ZM7.5 11 10 14H5Z" fill={DARK} /></Svg></ToolBtn>
                                    <ToolBtn $w={36}><Svg w={13} h={11}><path d="M0 1.5H13M0 5.5H13M0 9.5H13" stroke="#8b8f95" strokeWidth="2" /></Svg><Caret c="#a0a3a8" s={4} /></ToolBtn>
                                    <ToolSep />
                                    <ToolBtn $w={76}>Install Policy</ToolBtn>
                                    <ToolSep />
                                    <ToolBtn $w={78}>
                                        <Svg s={15}><path d="M6 3H1V14H12V9" fill="none" stroke={DARK} strokeWidth="1.6" /><path d="M5 10C5 6 8 4.5 10 4.5V1.5L15 5.5 10 9.500V6.5C8 6.5 6 7.5 5 10Z" fill={DARK} /></Svg>
                                        Actions <Caret c="#333" s={4} />
                                    </ToolBtn>
                                </ToolBox>
                                <SearchBox>
                                    Search for IP, object, action, ...
                                    <SearchGo>
                                        <Svg s={16}><circle cx="6.5" cy="6.5" r="5" fill="none" stroke="#a4a7ab" strokeWidth="1.8" /><path d="M10 10 15 15" stroke="#a4a7ab" strokeWidth="2.4" /></Svg>
                                    </SearchGo>
                                </SearchBox>
                                <ToolBox $w={95}>
                                    <ToolBtn $w={29}><Svg w={13} h={8}><path d="M1 1 6.5 7 12 1" fill="none" stroke="#a4a7ab" strokeWidth="1.5" /></Svg></ToolBtn>
                                    <ToolSep />
                                    <ToolBtn $w={30}><Svg w={13} h={8}><path d="M1 7 6.5 1 12 7" fill="none" stroke="#a4a7ab" strokeWidth="1.5" /></Svg></ToolBtn>
                                    <ToolSep />
                                    <FilterBtn><Svg w={10} h={13}><path d="M0 0H10L6.5 5V13H3.5V5Z" fill={DARK} /></Svg></FilterBtn>
                                </ToolBox>
                            </ToolRow>

                            <RuleTable>
                                <RuleHead>
                                    {RULE_HEADERS.map(h => <RuleHeadCell key={h}>{h}</RuleHeadCell>)}
                                </RuleHead>
                                {RULES.map(rule => (
                                    <div key={rule.no}>
                                        <Rule rule={rule} />
                                        {rule.group && <GroupRule />}
                                    </div>
                                ))}
                                <MissingRow>Missing cleanup rule - Unmatched traffic will be dropped and not logged.</MissingRow>
                            </RuleTable>

                            <DetailPanel>
                                <DetailTabs>
                                    <DetailTab $w={80} $pl={22} $sep>Summary</DetailTab>
                                    <DetailTab $w={70} $sep>Details</DetailTab>
                                    <DetailTab $w={70} $active>Logs</DetailTab>
                                    <DetailTab $w={70} $sep>History</DetailTab>
                                    <ExpandMark>
                                        <Svg w={7} h={10}><path d="M0 0H7V1H0ZM0 2H7L3.5 5ZM3.5 5.5 7 9H0Z" fill={DARK} /></Svg>
                                    </ExpandMark>
                                </DetailTabs>
                                <LogsBody>
                                    <QueryRow>
                                        <Svg s={16}><path d="M13.5 8A6 6 0 1 1 11 3" fill="none" stroke={DARK} strokeWidth="2" /><path d="M10 0 16 4 10 7Z" fill={DARK} /></Svg>
                                        <QuerySep />
                                        <Svg w={18} h={20}><circle cx="5" cy="5" r="4" fill="none" stroke={DARK} strokeWidth="1.5" /><path d="M8 0 11 3H8Z" fill={DARK} /><text x="9" y="19" fontSize="12" fill={DARK} fontFamily="Noto Sans">A</text></Svg>
                                        <QueryBox>
                                            <Svg s={15}><circle cx="6" cy="6" r="4.5" fill="none" stroke={DARK} strokeWidth="1.8" /><path d="M9.5 9.5 14 14" stroke={DARK} strokeWidth="2.6" /></Svg>
                                            <QueryGap $w={11} />
                                            <Svg s={13}><circle cx="6.5" cy="6.5" r="5.5" fill="none" stroke="#2e6fb5" strokeWidth="1.5" /><path d="M6.5 3V7H9.5" fill="none" stroke="#2e6fb5" strokeWidth="1.3" /></Svg>
                                            <QueryGap $w={6} />
                                            All Time
                                            <QueryGap $w={8} />
                                            <Caret c="#333" s={5} />
                                            <QueryGap $w={9} />
                                            <RuleChip>Current Rule<ChipClose>×</ChipClose></RuleChip>
                                            <QueryHint>Enter search query (Ctrl+F)</QueryHint>
                                        </QueryBox>
                                        <MenuMark><Svg w={13} h={11}><path d="M0 1.2H13M0 5.5H13M0 9.8H13" stroke={DARK} strokeWidth="1.8" /></Svg></MenuMark>
                                    </QueryRow>
                                    <ResultRow>
                                        <span>Showing first 50 results (246 ms) out of at least 53 results</span>
                                        <SyntaxLink>Query Syntax</SyntaxLink>
                                    </ResultRow>
                                    <LogFrame>
                                        <LogClip>
                                            <LogHead>
                                                <LogHeadCols>
                                                    {LOG_HEADERS.map((h, i) => <LogHeadCell key={i} $dots={h === '..'}>{h}</LogHeadCell>)}
                                                </LogHeadCols>
                                                <ScrollCap />
                                            </LogHead>
                                            <LogBodyWrap>
                                                <LogRows>
                                                    {[0, 1, 2, 3, 4, 5].map(i => <LogLine key={i} i={i} />)}
                                                </LogRows>
                                                <ScrollTrack><ScrollThumb /></ScrollTrack>
                                            </LogBodyWrap>
                                        </LogClip>
                                        <RedFrame />
                                    </LogFrame>
                                </LogsBody>
                            </DetailPanel>
                        </Content>
                    </MainRow>
                </LeftCol>

                <RightCol>
                    <TitleBar>
                        <Logo>
                            <Svg w={18} h={16}><rect x="3" y="0" width="13" height="10" fill="#fff" stroke="#57407a" /><path d="M5 8 8 3 11 6 14 2" fill="none" stroke="#d83e78" /><path d="M1 12H17L18 15H0Z" fill="#3d3a6e" /></Svg>
                        </Logo>
                        <Brand>
                            <BrandLine>Check Point</BrandLine>
                            <BrandLine $fs={11.5}>Smart<b>Console</b></BrandLine>
                        </Brand>
                        <WinBtn $w={12} $ml={18} $pt={13}><Svg w={12} h={2}><rect width="12" height="2" fill="#e8ecf2" /></Svg></WinBtn>
                        <WinBtn $w={12} $ml={17} $pt={5}>
                            <Svg s={12}><rect x="3.5" y=".5" width="8" height="7" fill="none" stroke="#e8ecf2" /><rect x=".5" y="3.5" width="8" height="8" fill="#172030" stroke="#e8ecf2" /></Svg>
                        </WinBtn>
                        <CloseBtn><Svg s={10}><path d="M1 1 9 9M9 1 1 9" stroke="#fff" strokeWidth="2" /></Svg></CloseBtn>
                    </TitleBar>
                    <PanelRow>
                        <ObjectsPanel>
                            <ObjectSearch>
                                <Svg s={15}><circle cx="6" cy="6" r="4.5" fill="none" stroke={DARK} strokeWidth="1.8" /><path d="M9.5 9.5 14 14" stroke={DARK} strokeWidth="2.6" /></Svg>
                                Search...
                            </ObjectSearch>
                            <ObjectTools>
                                <Svg w={13} h={9}><path d="M0 4.5 5 0V3H13V6H5V9Z" fill={DARK} /></Svg>
                                <ObjectToolGap $w={14} />
                                <Svg s={13}><path d="M6.5 0 13 6H11.5V13H8V8.5H5V13H1.5V6H0Z" fill={DARK} /></Svg>
                                <ObjectToolSep $ml={8} $mr={9} />
                                <Svg s={13}><path d="M0 2H2M0 6.5H2M0 11H2M4 2H13M4 6.5H13M4 11H13" stroke={DARK} strokeWidth="1.5" /></Svg>
                                <ObjectToolSep $ml={8} $mr={15} />
                                <Svg s={13}><path d="M6.5 0V13M0 6.5H13M2 2 11 11M11 2 2 11" stroke={DARK} /><circle cx="6.5" cy="6.5" r="2.5" fill={DARK} /></Svg>
                                <ObjectToolGap $w={6} />
                                New...
                                <ObjectToolGap $w={4} />
                                <Caret c="#333" s={5} />
                            </ObjectTools>
                            <ObjectGroup><span>Application/Site</span><span>1</span></ObjectGroup>
                            <ObjectItem><BaiduIcon />Baidu</ObjectItem>
                            <PanelSpacer />
                            <PreviewRule />
                            <Preview>
                                <PreviewName><BaiduIcon s={22} />Baidu</PreviewName>
                                <PreviewMeta><span>Last Modifier :</span><b>admin</b></PreviewMeta>
                            </Preview>
                        </ObjectsPanel>
                        <SideStrip>
                            <StripMark>
                                <Svg w={8} h={7}><path d="M0 0V7L3.5 3.5ZM4.5 0V7L8 3.5Z" fill={Gray} /></Svg>
                            </StripMark>
                            <StripTab $h={55} $active>Objects</StripTab>
                            <StripTab $h={58}>Validations</StripTab>
                        </SideStrip>
                    </PanelRow>
                </RightCol>
            </Workspace>

            <StatusBar>
                <StatusLeft>
                    <Svg><circle cx="7" cy="7" r="7" fill="#55ae0c" /><path d="M3.5 7.5 6 10 10.5 4.5" fill="none" stroke="#fff" strokeWidth="2" /></Svg>
                    Policy installation - Standard Succeeded
                    <Caret c="#8796ad" s={5} />
                </StatusLeft>
                <StatusMid>
                    <Svg w={8} h={14}><rect width="8" height="4" rx="1.5" fill="#aab3c0" /><rect y="5" width="8" height="4" rx="1" fill="#aab3c0" /><rect y="10" width="8" height="4" rx="1.5" fill="#aab3c0" /></Svg>
                    10.32.133.171
                </StatusMid>
                <StatusRight>
                    No changes<StatusSep />admin
                </StatusRight>
            </StatusBar>

            <Taskbar>
                <StartSlot>
                    <Svg s={37}>
                        <defs><radialGradient id="orb" cx="50%" cy="35%" r="65%"><stop offset="0" stopColor="#5fb4e6" /><stop offset="1" stopColor="#0d3f78" /></radialGradient></defs>
                        <circle cx="18.5" cy="18.5" r="18" fill="url(#orb)" stroke="#20486f" />
                        <path d="M9 13 17 11V18L10 19Z" fill="#e8552c" /><path d="M19 10.5 28 8 27 16 19 18Z" fill="#7ebb2a" /><path d="M10 21 17 20V27L8 28Z" fill="#2e8fe0" /><path d="M19 20 27 18.5 26 26 19 28Z" fill="#f6b91f" />
                    </Svg>
                </StartSlot>
                <FolderSlot>
                    <Svg w={33} h={29}>
                        <path d="M1 3H12L15 6H31V24H1Z" fill="#e8d28a" /><rect x="4" y="2" width="8" height="3" fill="#57b04a" /><rect x="20" y="4" width="8" height="3" fill="#3b8fdb" />
                        <path d="M0 8H32L31 26H1Z" fill="#f7e7ae" /><path d="M5 19H27V29H23V23H9V29H5Z" fill="#8fd0f2" stroke="#5aa2cf" strokeWidth=".6" />
                    </Svg>
                </FolderSlot>
                <TaskButton>
                    <Svg s={31}>
                        <defs><linearGradient id="fx" x1="0" y1="0" x2="1" y2="1"><stop offset="0" stopColor="#ffd23b" /><stop offset=".55" stopColor="#ff7a1a" /><stop offset="1" stopColor="#e8245c" /></linearGradient></defs>
                        <path d="M20 0C23 4 30 8 30 17A14.5 14.5 0 1 1 1 16C1 12 3 8 5 6 5 9 6 10 7 11 9 6 15 6 20 0Z" fill="url(#fx)" />
                        <circle cx="16" cy="16" r="7.5" fill="#6a3bc0" /><path d="M8 11C12 9 19 9 23 14 18 12 13 13 10 15Z" fill="#ff8a1f" />
                    </Svg>
                </TaskButton>
                <TaskButton><CmdTile>C:\_</CmdTile></TaskButton>
                <TaskButton>
                    <CrownTile><Svg w={22} h={15}><path d="M0 3 6 8 11 0 16 8 22 3 19 12H3Z" fill="#f6a623" /><rect x="3" y="13" width="16" height="2" fill="#f6a623" /></Svg></CrownTile>
                </TaskButton>
                <Tray>
                    <TrayItem $w={22}>CH</TrayItem>
                    <TrayItem $w={23}><Svg w={13} h={10}><path d="M0 1.5H13M0 5H13M0 8.5H13M3 0V10M6.5 0V10M10 0V10" stroke="#dfe5ec" /></Svg></TrayItem>
                    <TrayItem $w={23}><Svg s={13}><circle cx="6.5" cy="6.5" r="6.5" fill="#1a4fb0" /><path d="M4.5 4.5a2 2 0 1 1 2 2.5V8" fill="none" stroke="#fff" /></Svg></TrayItem>
                    <TrayItem $w={22}><Svg w={8} h={14}><rect x="1" y="1" width="6" height="5" fill="none" stroke="#fff" /></Svg></TrayItem>
                    <TrayItem $w={18}><Svg w={7} h={5}><path d="M0 5 3.5 0 7 5Z" fill="#fff" /></Svg></TrayItem>
                    <TrayItem $w={24}><Svg w={12} h={14}><path d="M1 0V14" stroke="#fff" /><path d="M2 1H11L9 4 11 7H2Z" fill="#fff" /></Svg></TrayItem>
                    <TrayItem $w={26}><Svg w={14} h={14}><rect x="1" y="1" width="12" height="9" fill="none" stroke="#fff" /><path d="M4 13H10M7 10V13" stroke="#fff" /></Svg></TrayItem>
                    <TrayItem $w={26}><Svg w={10} h={14}><path d="M0 5H3L7 1V13L3 9H0Z" fill="#fff" /><circle cx="7" cy="11" r="3" fill="#e23b3b" /></Svg></TrayItem>
                    <Clock>17:39<br />2021/3/2</Clock>
                    <ShowDesktop />
                </Tray>
                <Watermark>https://blog.csdn.net/weixin_50299079</Watermark>
            </Taskbar>
        </>
    );
}
